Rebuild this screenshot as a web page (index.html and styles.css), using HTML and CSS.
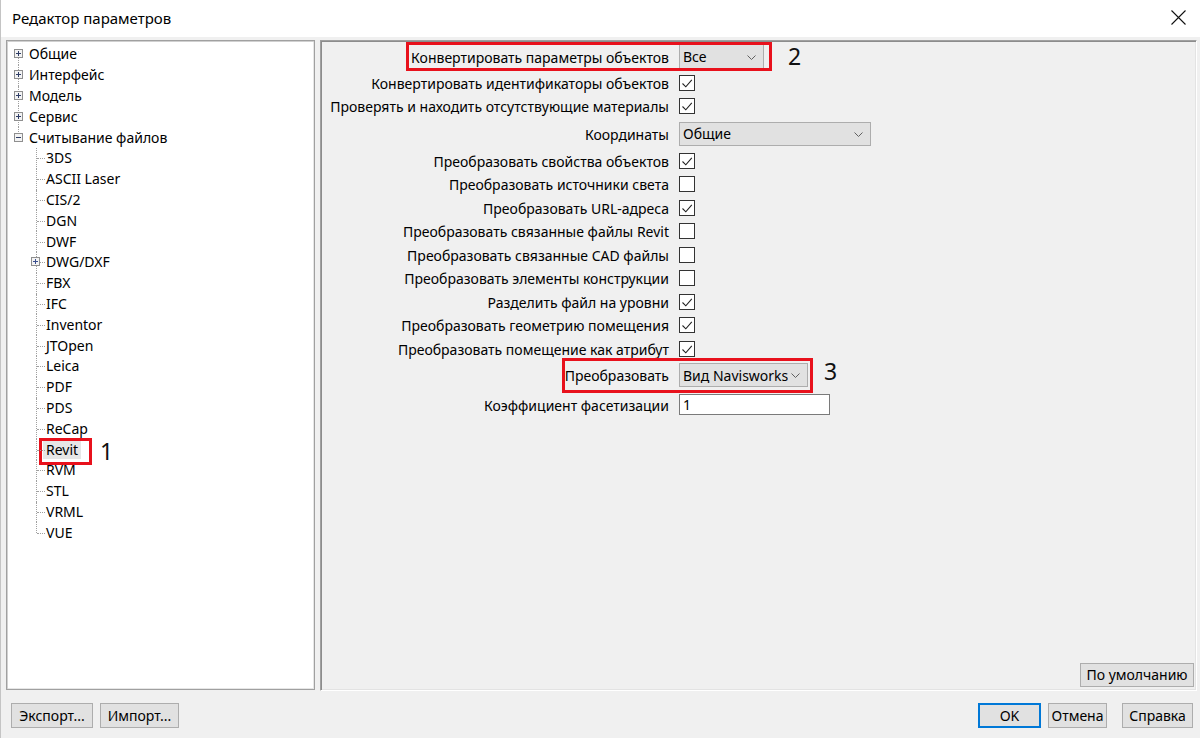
FILE: index.html
```html
<!DOCTYPE html>
<html lang="ru">
<head>
<meta charset="utf-8">
<title>Редактор параметров</title>
<link rel="stylesheet" href="styles.css">
</head>
<body>
<div class="window">
  <div class="titlebar">
    <span class="title">Редактор параметров</span>
    <svg class="close" width="15" height="15" viewBox="0 0 15 15"><path d="M0.5 0.5L14.5 14.5M14.5 0.5L0.5 14.5" stroke="#111" stroke-width="1.1" fill="none"/></svg>
  </div>
  <div class="main">
    <div class="tree">
      <div class="node l0 first"><svg class="exp" width="9" height="9" viewBox="0 0 9 9"><rect x="0.5" y="0.5" width="8" height="8" fill="#f3f3f3" stroke="#8f8f8f"/><path d="M2 4.5h5M4.5 2v5" stroke="#2f3d66"/></svg><span>Общие</span></div>
      <div class="node l0 mid"><svg class="exp" width="9" height="9" viewBox="0 0 9 9"><rect x="0.5" y="0.5" width="8" height="8" fill="#f3f3f3" stroke="#8f8f8f"/><path d="M2 4.5h5M4.5 2v5" stroke="#2f3d66"/></svg><span>Интерфейс</span></div>
      <div class="node l0 mid"><svg class="exp" width="9" height="9" viewBox="0 0 9 9"><rect x="0.5" y="0.5" width="8" height="8" fill="#f3f3f3" stroke="#8f8f8f"/><path d="M2 4.5h5M4.5 2v5" stroke="#2f3d66"/></svg><span>Модель</span></div>
      <div class="node l0 mid"><svg class="exp" width="9" height="9" viewBox="0 0 9 9"><rect x="0.5" y="0.5" width="8" height="8" fill="#f3f3f3" stroke="#8f8f8f"/><path d="M2 4.5h5M4.5 2v5" stroke="#2f3d66"/></svg><span>Сервис</span></div>
      <div class="node l0 last"><svg class="exp" width="9" height="9" viewBox="0 0 9 9"><rect x="0.5" y="0.5" width="8" height="8" fill="#f3f3f3" stroke="#8f8f8f"/><path d="M2 4.5h5" stroke="#2f3d66"/></svg><span>Считывание файлов</span></div>
      <div class="node l1"><span>3DS</span></div>
      <div class="node l1"><span>ASCII Laser</span></div>
      <div class="node l1"><span>CIS/2</span></div>
      <div class="node l1"><span>DGN</span></div>
      <div class="node l1"><span>DWF</span></div>
      <div class="node l1 has-exp"><svg class="exp" width="9" height="9" viewBox="0 0 9 9"><rect x="0.5" y="0.5" width="8" height="8" fill="#f3f3f3" stroke="#8f8f8f"/><path d="M2 4.5h5M4.5 2v5" stroke="#3a4f8f"/></svg><span>DWG/DXF</span></div>
      <div class="node l1"><span>FBX</span></div>
      <div class="node l1"><span>IFC</span></div>
      <div class="node l1"><span>Inventor</span></div>
      <div class="node l1"><span>JTOpen</span></div>
      <div class="node l1"><span>Leica</span></div>
      <div class="node l1"><span>PDF</span></div>
      <div class="node l1"><span>PDS</span></div>
      <div class="node l1"><span>ReCap</span></div>
      <div class="node l1"><span class="selected">Revit</span><span class="mark mark-revit"></span><span class="num num-1">1</span></div>
      <div class="node l1"><span>RVM</span></div>
      <div class="node l1"><span>STL</span></div>
      <div class="node l1"><span>VRML</span></div>
      <div class="node l1 last-child"><span>VUE</span></div>
    </div>
    <div class="props">
      <div class="rows">
        <div class="prow h29">
          <div class="label">Конвертировать параметры объектов</div>
          <div class="combo c1"><span class="ctext">Все</span><svg class="chev" width="9" height="5" viewBox="0 0 9 5"><path d="M0.5 0.5L4.5 4.5L8.5 0.5" stroke="#606060" fill="none"/></svg></div>
          <span class="mark mark-2"></span><span class="num num-2">2</span>
        </div>
        <div class="prow">
          <div class="label">Конвертировать идентификаторы объектов</div>
          <svg class="cb" width="16" height="16" viewBox="0 0 16 16"><rect x="0.5" y="0.5" width="15" height="15" fill="#fff" stroke="#333"/><path d="M3.5 8.5L6.8 11.8L12.8 4.8" stroke="#222" stroke-width="1.1" fill="none"/></svg>
        </div>
        <div class="prow">
          <div class="label">Проверять и находить отсутствующие материалы</div>
          <svg class="cb" width="16" height="16" viewBox="0 0 16 16"><rect x="0.5" y="0.5" width="15" height="15" fill="#fff" stroke="#333"/><path d="M3.5 8.5L6.8 11.8L12.8 4.8" stroke="#222" stroke-width="1.1" fill="none"/></svg>
        </div>
        <div class="prow h31">
          <div class="label">Координаты</div>
          <div class="combo c2"><span class="ctext">Общие</span><svg class="chev" width="9" height="5" viewBox="0 0 9 5"><path d="M0.5 0.5L4.5 4.5L8.5 0.5" stroke="#606060" fill="none"/></svg></div>
        </div>
        <div class="prow">
          <div class="label">Преобразовать свойства объектов</div>
          <svg class="cb" width="16" height="16" viewBox="0 0 16 16"><rect x="0.5" y="0.5" width="15" height="15" fill="#fff" stroke="#333"/><path d="M3.5 8.5L6.8 11.8L12.8 4.8" stroke="#222" stroke-width="1.1" fill="none"/></svg>
        </div>
        <div class="prow">
          <div class="label">Преобразовать источники света</div>
          <svg class="cb" width="16" height="16" viewBox="0 0 16 16"><rect x="0.5" y="0.5" width="15" height="15" fill="#fff" stroke="#333"/></svg>
        </div>
        <div class="prow">
          <div class="label">Преобразовать URL-адреса</div>
          <svg class="cb" width="16" height="16" viewBox="0 0 16 16"><rect x="0.5" y="0.5" width="15" height="15" fill="#fff" stroke="#333"/><path d="M3.5 8.5L6.8 11.8L12.8 4.8" stroke="#222" stroke-width="1.1" fill="none"/></svg>
        </div>
        <div class="prow">
          <div class="label">Преобразовать связанные файлы Revit</div>
          <svg class="cb" width="16" height="16" viewBox="0 0 16 16"><rect x="0.5" y="0.5" width="15" height="15" fill="#fff" stroke="#333"/></svg>
        </div>
        <div class="prow">
          <div class="label">Преобразовать связанные CAD файлы</div>
          <svg class="cb" width="16" height="16" viewBox="0 0 16 16"><rect x="0.5" y="0.5" width="15" height="15" fill="#fff" stroke="#333"/></svg>
        </div>
        <div class="prow">
          <div class="label">Преобразовать элементы конструкции</div>
          <svg class="cb" width="16" height="16" viewBox="0 0 16 16"><rect x="0.5" y="0.5" width="15" height="15" fill="#fff" stroke="#333"/></svg>
        </div>
        <div class="prow">
          <div class="label">Разделить файл на уровни</div>
          <svg class="cb" width="16" height="16" viewBox="0 0 16 16"><rect x="0.5" y="0.5" width="15" height="15" fill="#fff" stroke="#333"/><path d="M3.5 8.5L6.8 11.8L12.8 4.8" stroke="#222" stroke-width="1.1" fill="none"/></svg>
        </div>
        <div class="prow">
          <div class="label">Преобразовать геометрию помещения</div>
          <svg class="cb" width="16" height="16" viewBox="0 0 16 16"><rect x="0.5" y="0.5" width="15" height="15" fill="#fff" stroke="#333"/><path d="M3.5 8.5L6.8 11.8L12.8 4.8" stroke="#222" stroke-width="1.1" fill="none"/></svg>
        </div>
        <div class="prow">
          <div class="label">Преобразовать помещение как атрибут</div>
          <svg class="cb" width="16" height="16" viewBox="0 0 16 16"><rect x="0.5" y="0.5" width="15" height="15" fill="#fff" stroke="#333"/><path d="M3.5 8.5L6.8 11.8L12.8 4.8" stroke="#222" stroke-width="1.1" fill="none"/></svg>
        </div>
        <div class="prow h29">
          <div class="label">Преобразовать</div>
          <div class="combo c3"><span class="ctext">Вид Navisworks</span><svg class="chev" width="9" height="5" viewBox="0 0 9 5"><path d="M0.5 0.5L4.5 4.5L8.5 0.5" stroke="#606060" fill="none"/></svg></div>
          <span class="mark mark-3"></span><span class="num num-3">3</span>
        </div>
        <div class="prow h30">
          <div class="label">Коэффициент фасетизации</div>
          <div class="input">1</div>
        </div>
      </div>
      <div class="props-foot">
        <div class="btn btn-default">По умолчанию</div>
      </div>
    </div>
  </div>
  <div class="footer">
    <div class="btn btn-export">Экспорт...</div>
    <div class="btn btn-import">Импорт...</div>
    <div class="spacer"></div>
    <div class="btn btn-ok">OK</div>
    <div class="btn btn-cancel">Отмена</div>
    <div class="btn btn-help">Справка</div>
  </div>
</div>
</body>
</html>
```

FILE: styles.css
```css
* { box-sizing: border-box; }
html, body { margin: 0; padding: 0; }
body {
  background: #f0f0f0;
  font-family: "Noto Sans", "Open Sans", sans-serif;
  font-size: 14px;
  color: #000;
}
.window {
  width: 1200px;
  height: 738px;
  display: flex;
  flex-direction: column;
  border-left: 1px solid #c4c4c4;
  overflow: hidden;
}
.titlebar {
  height: 37px;
  background: #fff;
  display: flex;
  align-items: center;
  padding: 0 14px 2px 11px;
}
.title { flex: 1; line-height: 20px; font-size: 15px; }
.close { display: block; }

.main {
  height: 651px;
  margin-top: 3px;
  padding: 0 3px 0 5px;
  display: flex;
  gap: 5px;
}
.tree {
  width: 309px;
  height: 650px;
  background: #fff;
  border: 1px solid #a0a0a0;
  box-shadow: inset 1px 1px 0 #d0d0d0, inset -1px -1px 0 #e6e6e6;
  padding-top: 3px;
}
.node {
  position: relative;
  height: 20.8px;
  display: flex;
  align-items: center;
  line-height: 20px;
  white-space: nowrap;
}
.node .exp { display: block; flex: none; position: relative; z-index: 1; margin-top: -1px; }
.node.l0 { padding-left: 7px; }
.node.l0 .exp { margin-right: 6px; }
.node.l1 { padding-left: 39px; }
.node.l1.has-exp { padding-left: 24px; }
.node.l1.has-exp .exp { margin-right: 6px; }

/* tree connector lines */
.node.l0::before {
  content: "";
  position: absolute;
  left: 11px;
  top: 0;
  bottom: 0;
  border-left: 1px dotted #a0a0a0;
}
.node.l0.first::before { top: 50%; }
.node.l0.last::before { bottom: 50%; }
.node.l1::before {
  content: "";
  position: absolute;
  left: 29px;
  top: 0;
  bottom: 0;
  border-left: 1px dotted #a0a0a0;
}
.node.l1.last-child::before { bottom: 50%; }
.node.l1::after {
  content: "";
  position: absolute;
  left: 30px;
  width: 8px;
  top: 50%;
  border-top: 1px dotted #a0a0a0;
}

.selected {
  background: #e6e6e6;
  padding: 0 3px;
  margin-left: -3px;
  line-height: 19px;
}
.mark {
  position: absolute;
  border: 3px solid #e8111c;
  pointer-events: none;
}
.mark-revit { left: 32px; top: -1px; width: 53px; height: 27px; }
.num {
  position: absolute;
  font-size: 23px;
  line-height: 28px;
  color: #111;
}
.num-1 { left: 93px; top: -2px; }

/* properties panel */
.props {
  flex: 1;
  height: 651px;
  display: flex;
  flex-direction: column;
  border-top: 1px solid #a0a0a0;
  border-left: 1px solid #a0a0a0;
  border-right: 1px solid #fff;
  border-bottom: 1px solid #fff;
  box-shadow: inset 1px 1px 0 #8c8c8c, inset -1px -1px 0 #e3e3e3;
  padding-top: 1px;
}
.rows { display: flex; flex-direction: column; }
.prow {
  position: relative;
  height: 23.5px;
  display: grid;
  grid-template-columns: 348px auto;
  column-gap: 10px;
  align-items: center;
  justify-items: start;
}
.prow.h29 { height: 29px; }
.prow.h30 { height: 30px; }
.prow.h31 { height: 31px; }
.label {
  display: flex;
  justify-content: flex-end;
  white-space: nowrap;
  width: 100%;
  line-height: 20px;
  padding-top: 2px;
}
.cb { display: block; }
.combo {
  height: 24px;
  background: #e1e1e1;
  border: 1px solid #adadad;
  display: flex;
  align-items: center;
  padding: 1px 7px 0 3px;
}
.combo .ctext {
  flex: 1;
  overflow: hidden;
  white-space: nowrap;
  line-height: 20px;
}
.combo .chev { display: block; flex: none; margin-left: 3px; }
.combo.c1 { width: 85px; height: 26px; }
.combo.c2 { width: 192px; }
.combo.c3 { width: 129px; }
.input {
  width: 151px;
  height: 21px;
  background: #fff;
  border: 1px solid #7a7a7a;
  padding-left: 3px;
  line-height: 19px;
}
.mark-2 { left: 85px; top: 0; width: 366px; height: 29px; }
.num-2 { left: 467px; top: 0; }
.mark-3 { left: 241px; top: -3px; width: 251px; height: 35px; }
.num-3 { left: 503px; top: -4px; }

.props-foot {
  margin-top: auto;
  display: flex;
  justify-content: flex-end;
  padding: 0 2px 3px 0;
}

/* buttons */
.btn {
  height: 25px;
  background: #e1e1e1;
  border: 1px solid #adadad;
  display: flex;
  align-items: center;
  justify-content: center;
  line-height: 20px;
  white-space: nowrap;
}
.btn-default { width: 114px; height: 24px; }
.footer {
  flex: 1;
  display: flex;
  align-items: flex-start;
  padding: 12px 7px 0 10px;
  gap: 7px;
}
.spacer { flex: 1; }
.btn-export { width: 82px; }
.btn-import { width: 79px; }
.btn-ok { width: 63px; border: 2px solid #0078d7; }
.btn-cancel { width: 59px; }
.btn-help { width: 71px; margin-left: 8px; }
```
